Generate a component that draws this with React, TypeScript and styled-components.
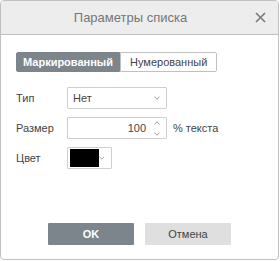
import React from 'react';
import styled, { createGlobalStyle } from 'styled-components';

const GlobalStyle = createGlobalStyle`
  body {
    margin: 0;
    background: #ffffff;
    font-family: 'Liberation Sans', Arial, sans-serif;
  }
`;

const Dialog = styled.div`
  width: 279px;
  height: 260px;
  box-sizing: border-box;
  border: 1px solid #c0c0c0;
  border-radius: 4px;
  background: #fff;
  display: flex;
  flex-direction: column;
  overflow: hidden;
`;

const Header = styled.div`
  height: 33px;
  flex-shrink: 0;
  background: #ededed;
  border-bottom: 1px solid #c0c0c0;
  display: flex;
  align-items: center;
  justify-content: center;
  position: relative;
  font-size: 13px;
  color: #767676;
  padding-right: 18px;
`;

const Close = styled.span`
  position: absolute;
  right: 12px;
  top: 10px;
  width: 11px;
  height: 11px;
`;

const Body = styled.div`
  flex: 1;
  padding: 17px 15px 0 15px;
  display: flex;
  flex-direction: column;
`;

const Tabs = styled.div`
  display: flex;
  margin-bottom: 15px;
`;

const Tab = styled.div<{ $active?: boolean }>`
  height: 20px;
  box-sizing: border-box;
  padding: 0 ${p => (p.$active ? '6px' : '9px')};
  display: flex;
  align-items: center;
  font-size: 11px;
  border: 1px solid ${p => (p.$active ? '#7d858c' : '#c0c0c0')};
  background: ${p => (p.$active ? '#7d858c' : '#fff')};
  color: ${p => (p.$active ? '#fff' : '#444')};
  font-weight: ${p => (p.$active ? 'bold' : 'normal')};
  border-radius: ${p => (p.$active ? '2px 0 0 2px' : '0 2px 2px 0')};
`;

const Row = styled.div`
  display: flex;
  align-items: center;
  height: 22px;
  margin-bottom: 8px;
  font-size: 11px;
  color: #444;
`;

const Label = styled.div`
  width: 51px;
`;

const Field = styled.div<{ $w: number }>`
  width: ${p => p.$w}px;
  height: 22px;
  box-sizing: border-box;
  border: 1px solid #cfcfcf;
  border-radius: 1px;
  display: flex;
  align-items: center;
  padding: 0 6px 0 5px;
  color: #444;
  font-size: 11px;
`;

const Value = styled.span<{ $right?: boolean }>`
  flex: 1;
  text-align: ${p => (p.$right ? 'right' : 'left')};
`;

const Spin = styled.div`
  display: flex;
  flex-direction: column;
  margin-left: 8px;
  gap: 7px;
`;

const Swatch = styled.div`
  width: 32px;
  height: 18px;
  background: #000;
  margin-left: -3px;
`;

const Suffix = styled.span`
  margin-left: 6px;
`;

const Footer = styled.div`
  display: flex;
  justify-content: center;
  gap: 11px;
  padding-bottom: 14px;
`;

const Button = styled.div<{ $primary?: boolean }>`
  width: 86px;
  height: 22px;
  display: flex;
  align-items: center;
  justify-content: center;
  font-size: 11px;
  border-radius: 1px;
  background: ${p => (p.$primary ? '#7d858c' : '#dfdfdf')};
  color: ${p => (p.$primary ? '#fff' : '#444')};
  font-weight: ${p => (p.$primary ? 'bold' : 'normal')};
`;

const Chevron = ({ up }: { up?: boolean }) => (
  <svg width="6" height="4" viewBox="0 0 6 4" style={{ display: 'block' }}>
    <path d={up ? 'M0.5 3.2 L3 0.8 L5.5 3.2' : 'M0.5 0.8 L3 3.2 L5.5 0.8'} fill="none" stroke="#8a8a8a" strokeWidth="0.9" />
  </svg>
);

const App = () => (
  <>
    <GlobalStyle />
    <Dialog>
      <Header>
        Параметры списка
        <Close>
          <svg width="11" height="11" viewBox="0 0 11 11">
            <path d="M1 1 L10 10 M10 1 L1 10" stroke="#7a7a7a" strokeWidth="1.6" />
          </svg>
        </Close>
      </Header>
      <Body>
        <Tabs>
          <Tab $active>Маркированный</Tab>
          <Tab>Нумерованный</Tab>
        </Tabs>
        <Row>
          <Label>Тип</Label>
          <Field $w={100}>
            <Value>Нет</Value>
            <Chevron />
          </Field>
        </Row>
        <Row>
          <Label>Размер</Label>
          <Field $w={100}>
            <Value $right>100</Value>
            <Spin>
              <Chevron up />
              <Chevron />
            </Spin>
          </Field>
          <Suffix>% текста</Suffix>
        </Row>
        <Row>
          <Label>Цвет</Label>
          <Field $w={45}>
            <Swatch />
            <Value />
            <Chevron />
          </Field>
        </Row>
      </Body>
      <Footer>
        <Button $primary>OK</Button>
        <Button>Отмена</Button>
      </Footer>
    </Dialog>
  </>
);

export default App;
